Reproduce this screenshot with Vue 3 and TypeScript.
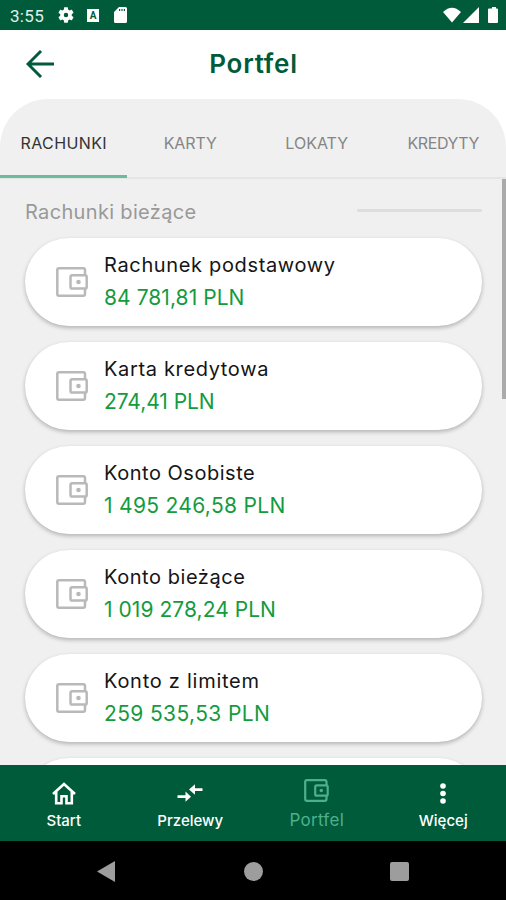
<script setup lang="ts">
interface Account { name: string; amount: string; nameSpacing: number; amountSpacing: number }
interface Tab { label: string; spacing: number; active?: boolean }
interface NavItem { label: string; icon: string; active?: boolean }

const tabs: Tab[] = [
  { label: 'RACHUNKI', spacing: 0.4, active: true },
  { label: 'KARTY', spacing: -0.1 },
  { label: 'LOKATY', spacing: 0 },
  { label: 'KREDYTY', spacing: -0.4 },
]

const accounts: Account[] = [
  { name: 'Rachunek podstawowy', amount: '84 781,81 PLN', nameSpacing: 0.65, amountSpacing: 0.06 },
  { name: 'Karta kredytowa', amount: '274,41 PLN', nameSpacing: 0.65, amountSpacing: -0.05 },
  { name: 'Konto Osobiste', amount: '1 495 246,58 PLN', nameSpacing: 0.52, amountSpacing: 0.31 },
  { name: 'Konto bieżące', amount: '1 019 278,24 PLN', nameSpacing: 0.55, amountSpacing: 0.05 },
  { name: 'Konto z limitem', amount: '259 535,53 PLN', nameSpacing: 0.74, amountSpacing: 0.37 },
  { name: '', amount: '', nameSpacing: 0, amountSpacing: 0 },
]

const navItems: NavItem[] = [
  { label: 'Start', icon: 'home' },
  { label: 'Przelewy', icon: 'transfer' },
  { label: 'Portfel', icon: 'wallet', active: true },
  { label: 'Więcej', icon: 'more' },
]
</script>

<template>
  <div class="screen">
    <div class="status">
      <span class="time">3:55</span>
      <svg class="gear" viewBox="2 2 20 20"><path fill="currentColor" fill-rule="evenodd" d="M19.14 12.94c.04-.3.06-.61.06-.94 0-.32-.02-.64-.07-.94l2.03-1.58a.49.49 0 0 0 .12-.61l-1.92-3.32a.49.49 0 0 0-.59-.22l-2.39.96c-.5-.38-1.03-.7-1.62-.94l-.36-2.54a.48.48 0 0 0-.48-.41h-3.84c-.24 0-.43.17-.47.41l-.36 2.54c-.59.24-1.13.57-1.62.94l-2.39-.96a.48.48 0 0 0-.59.22L2.74 8.87c-.12.21-.08.47.12.61l2.03 1.58c-.05.3-.09.63-.09.94s.02.64.07.94l-2.03 1.58a.49.49 0 0 0-.12.61l1.92 3.32c.12.22.37.29.59.22l2.39-.96c.5.38 1.03.7 1.62.94l.36 2.54c.05.24.24.41.48.41h3.84c.24 0 .44-.17.47-.41l.36-2.54c.59-.24 1.13-.56 1.62-.94l2.39.96c.22.08.47 0 .59-.22l1.92-3.32a.49.49 0 0 0-.12-.61zM12 14.8a2.8 2.8 0 1 1 0-5.6 2.8 2.8 0 0 1 0 5.600z" /></svg>
      <span class="badge-a">A</span>
      <svg class="sd" viewBox="0 0 13 16"><path fill="currentColor" fill-rule="evenodd" d="M5 0h6.500Q13 0 13 1.500v13Q13 16 11.500 16h-10Q0 16 0 14.500V5zM5 2v2h1.200V2zm2.400 0v2h1.200V2zm2.400 0v2H11V2z" /></svg>
      <svg class="signals" viewBox="0 0 55 17"><path fill="currentColor" d="M0 5Q9-3.500 18 5L9 15.500zM36 0v16H20zM47 1.500h2V0h4v1.500h1q1 0 1 1v12.500q0 1-1 1h-8q-1 0-1-1v-12.500q0-1 1-1z" /></svg>
    </div>

    <header class="header">
      <svg class="back" viewBox="0 0 28 28"><path fill="none" stroke="currentColor" stroke-width="2.900" d="M28 14H2M15 1L2 14l13 13" /></svg>
      <h1>Portfel</h1>
    </header>

    <main class="sheet">
      <nav class="tabs">
        <div v-for="t in tabs" :key="t.label" class="tab" :class="{ active: t.active }" :style="{ letterSpacing: t.spacing + 'px' }">{{ t.label }}</div>
      </nav>
      <section class="list">
        <div class="scrollbar"></div>
        <div class="section-head"><h2>Rachunki bieżące</h2><i class="rule"></i></div>
        <article v-for="(a, i) in accounts" :key="i" class="card">
          <svg class="wallet" viewBox="0 0 32 30"><g fill="none" stroke="currentColor" stroke-width="2.500"><path d="M29 8V3q0-1.700-1.700-1.700H3Q1.300 1.300 1.300 3v24q0 1.700 1.700 1.700h24.300Q29 28.700 29 27v-5" /><rect x="14.500" y="8.300" width="16.200" height="13.300" rx="1.700" /></g><circle cx="22.500" cy="15" r="2.300" fill="currentColor" /></svg>
          <div class="info">
            <div class="name" :style="{ letterSpacing: a.nameSpacing + 'px' }">{{ a.name }}</div>
            <div class="amount" :style="{ letterSpacing: a.amountSpacing + 'px' }">{{ a.amount }}</div>
          </div>
        </article>
      </section>
    </main>

    <nav class="bottom">
      <div v-for="n in navItems" :key="n.label" class="nav-item" :class="{ active: n.active }">
        <svg v-if="n.icon === 'home'" width="24" height="23" viewBox="0 0 24 23"><path fill="none" stroke="currentColor" stroke-width="2.600" d="M1 12L12 2l11 10M4.200 9.500v11.800h5.300v-7h5v7h5.300V9.500" /></svg>
        <svg v-else-if="n.icon === 'transfer'" width="26" height="23" viewBox="0 0 26 23"><path fill="currentColor" d="M12 7.500l6-5.200v4h7.500v2.600H18v3.900zM.500 13.300h8V9.500l5.500 5.200-5.500 5v-3.800h-8z" /></svg>
        <svg v-else-if="n.icon === 'wallet'" width="25" height="23" viewBox="0 0 25 23"><g fill="none" stroke="currentColor" stroke-width="2.200"><path d="M22.500 6V3q0-1.800-1.800-1.800H3Q1.200 1.200 1.200 3v17q0 1.800 1.800 1.800h17.700q1.800 0 1.800-1.800v-3" /><rect x="11.200" y="6.300" width="12.500" height="10.400" rx="1.500" /></g><circle cx="17.300" cy="11.500" r="1.800" fill="currentColor" /></svg>
        <svg v-else width="8" height="23" viewBox="0 0 8 23"><g fill="currentColor"><circle cx="4" cy="4" r="2.800" /><circle cx="4" cy="11.500" r="2.800" /><circle cx="4" cy="19" r="2.800" /></g></svg>
        <span>{{ n.label }}</span>
      </div>
    </nav>

    <div class="system">
      <svg class="sys-back" viewBox="0 0 18 21"><path fill="currentColor" d="M18 0v21L0 10.500z" /></svg>
      <i class="sys-home"></i>
      <i class="sys-recent"></i>
    </div>
  </div>
</template>

<style>
body { margin: 0; }
</style>

<style scoped>
.screen { width: 506px; height: 900px; display: flex; flex-direction: column; overflow: hidden; background: #fff; font-family: Inter, "Noto Sans", sans-serif; }
.status { flex: none; height: 30px; box-sizing: border-box; background: #005b3b; color: #fff; display: flex; align-items: center; padding: 0 8px 0 10px; }
.time { font: 17px/30px Roboto, sans-serif; letter-spacing: .3px; width: 48px; padding-top: 2px; color: #e3efea; }
.gear { width: 16px; height: 16px; margin-right: 13px; }
.badge-a { width: 12px; height: 13px; margin-right: 15px; background: #fff; color: #005b3b; font: bold 10px/13px Roboto, sans-serif; text-align: center; }
.sd { width: 13px; height: 16px; }
.signals { width: 55px; height: 17px; margin-left: auto; }
.header { flex: none; height: 69px; box-sizing: border-box; padding-bottom: 1px; display: grid; grid-template-columns: 54px 1fr 54px; align-items: center; color: #005b3b; }
.back { width: 28px; height: 28px; margin-left: 26px; }
h1 { margin: 0; font-size: 26px; font-weight: 600; line-height: 30px; text-align: center; letter-spacing: .75px; padding-left: 1px; }
.sheet { flex: 1; min-height: 0; display: flex; flex-direction: column; background: #f0f0f0; border-radius: 48px 48px 0 0; overflow: hidden; }
.tabs { flex: none; height: 80px; box-sizing: border-box; display: grid; grid-template-columns: repeat(4, 1fr); border-bottom: 2px solid #e5e5e5; }
.tab { font-size: 16px; line-height: 88px; height: 79px; text-align: center; padding-left: 1px; color: #858585; box-sizing: border-box; }
.tab.active { color: #333; border-bottom: 3px solid #69bd9c; }
.list { position: relative; flex: 1; min-height: 0; overflow: hidden; padding: 0 24px 0 25px; }
.scrollbar { position: absolute; right: 0; top: 0; width: 4px; height: 220px; background: #aaa; }
.section-head { height: 59px; display: flex; align-items: center; justify-content: space-between; }
h2 { margin: 0; font-size: 20px; line-height: 28px; font-weight: 400; letter-spacing: .33px; color: #999; padding-top: 6px; }
.rule { width: 125px; height: 3px; background: #dedede; margin-top: 3px; border-radius: 1px; }
.card { height: 88px; margin-bottom: 16px; box-sizing: border-box; padding-left: 31px; display: flex; gap: 16px; align-items: center; background: #fff; border-radius: 44px; box-shadow: 0 2px 4px rgba(0, 0, 0, .26); }
.wallet { flex: none; width: 32px; height: 30px; color: #b9b9b9; }
.info { white-space: nowrap; padding-bottom: 2px; }
.name { font-size: 20px; line-height: 33px; color: #151515; }
.amount { font-size: 21px; line-height: 32px; color: #139b3e; }
.bottom { flex: none; height: 76px; display: grid; grid-template-columns: repeat(4, 1fr); background: #005b3b; color: #fff; }
.nav-item { display: flex; flex-direction: column; align-items: center; padding: 17px 0 0 1px; font-size: 15px; font-weight: 500; line-height: 20px; gap: 6px; }
.nav-item.active { color: #4db08c; font-size: 17px; font-weight: 400; letter-spacing: .3px; padding-top: 14px; gap: 8px; }
.system { flex: none; height: 59px; box-sizing: border-box; background: #000; color: #9d9d9d; display: flex; align-items: center; padding: 1px 97px 0; justify-content: space-between; }
.sys-back { width: 18px; height: 21px; }
.sys-home { width: 19px; height: 19px; margin-left: 1px; border-radius: 50%; background: currentColor; }
.sys-recent { width: 19px; height: 19px; border-radius: 2px; background: currentColor; }
</style>
